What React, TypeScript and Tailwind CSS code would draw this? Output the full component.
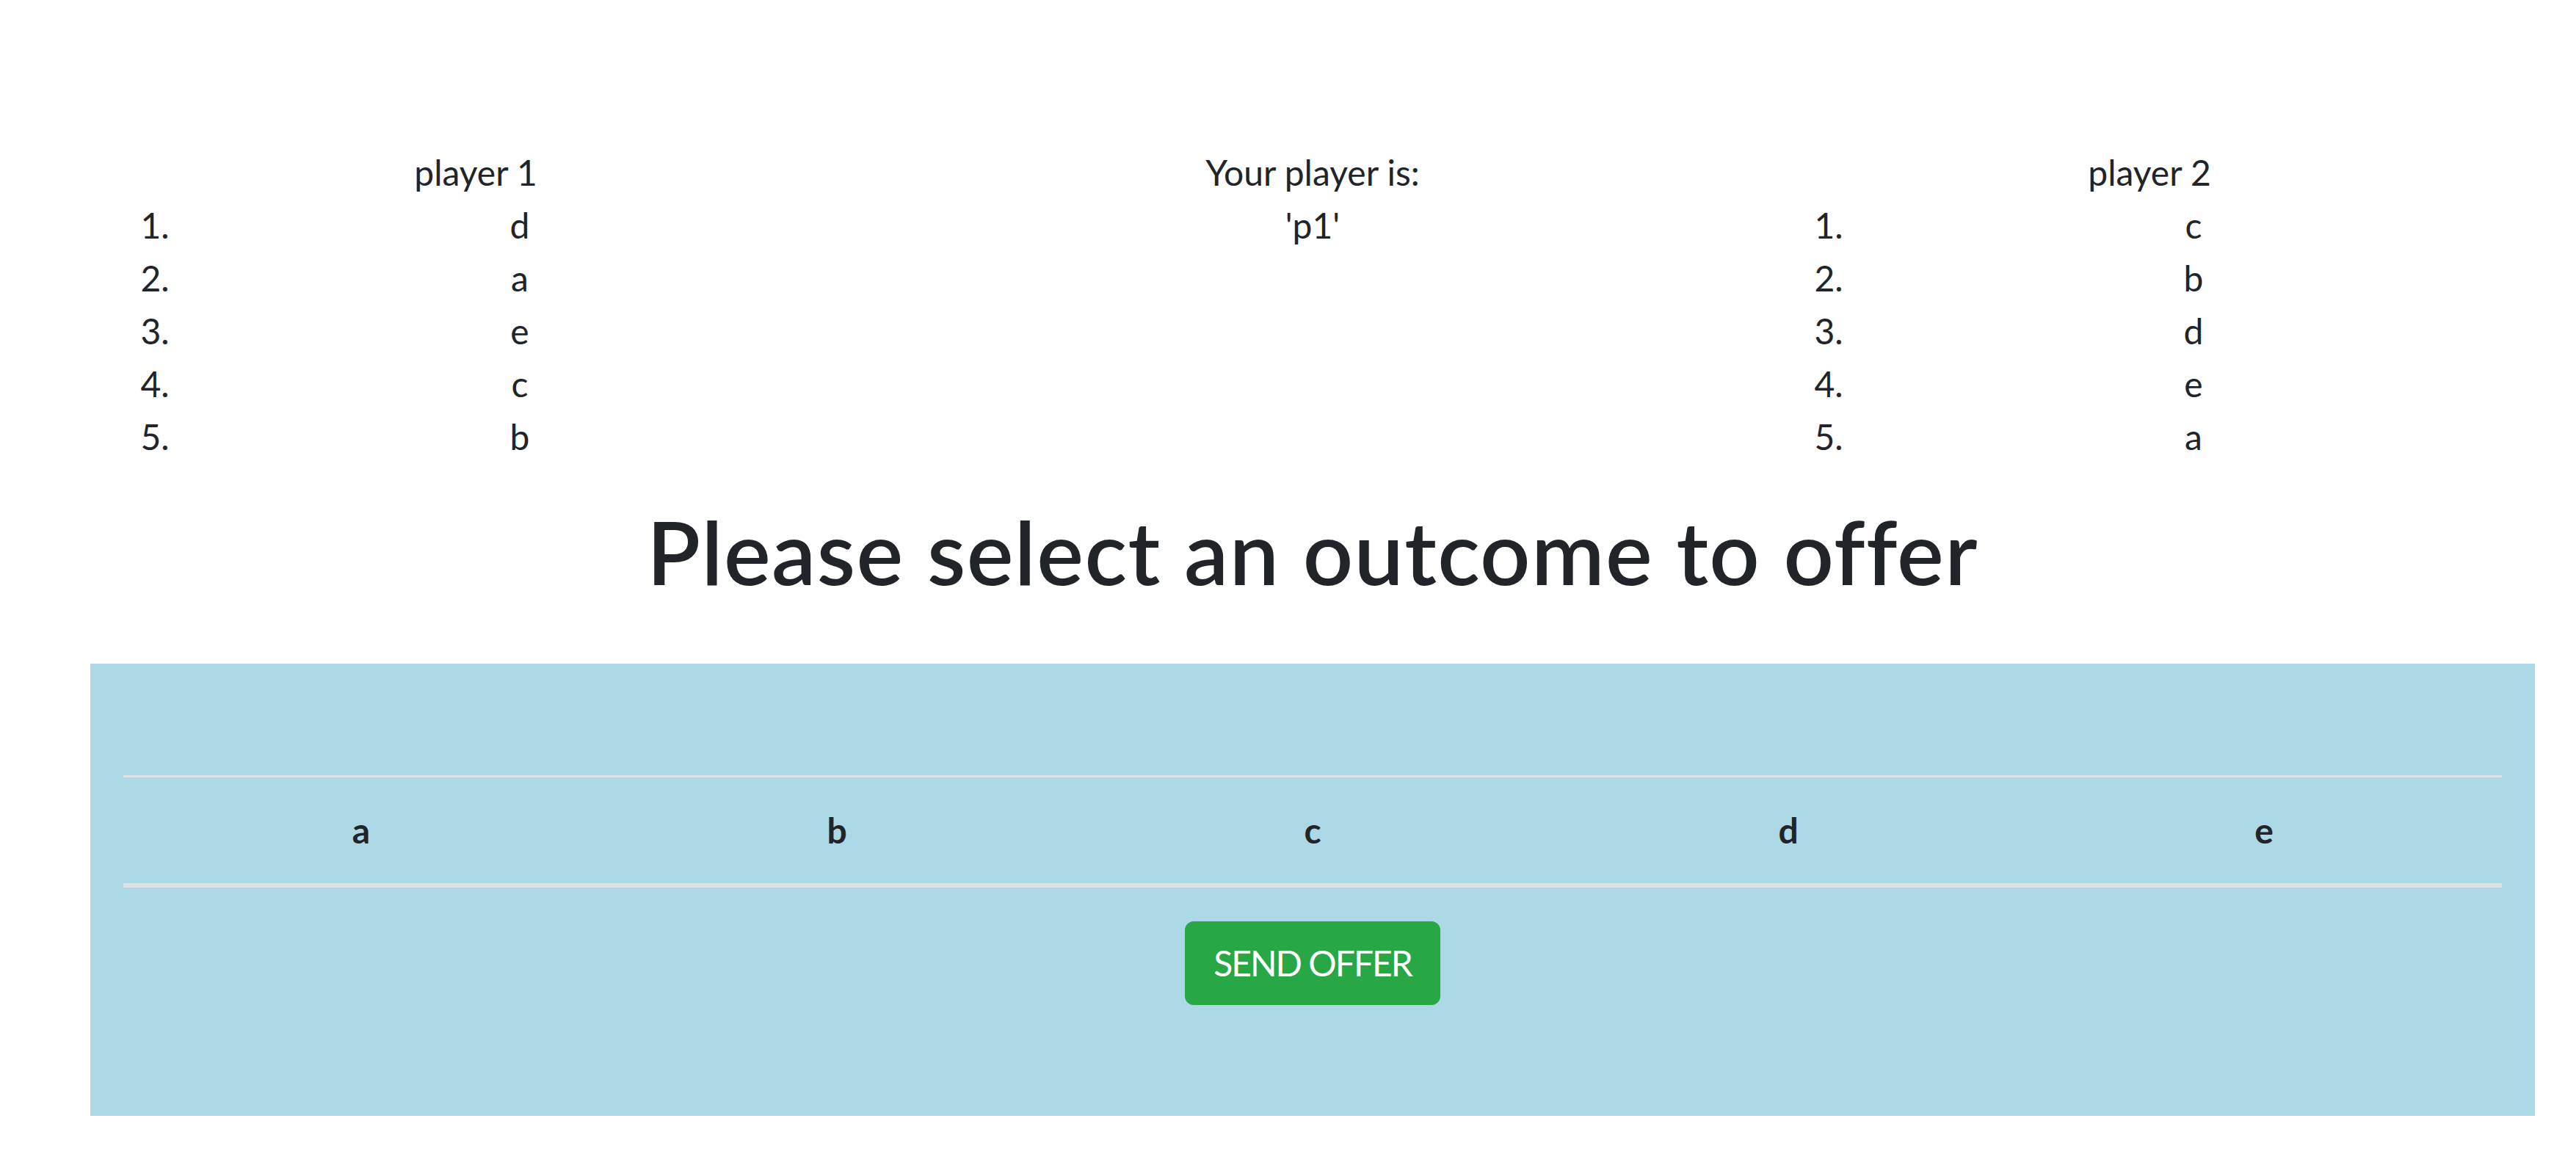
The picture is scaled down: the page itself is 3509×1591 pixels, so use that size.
import React from 'react';

const player1 = ['d', 'a', 'e', 'c', 'b'];
const player2 = ['c', 'b', 'd', 'e', 'a'];
const outcomes = ['a', 'b', 'c', 'd', 'e'];

const PreferenceList: React.FC<{ title: string; items: string[] }> = ({ title, items }) => (
  <div>
    <div className="text-center">{title}</div>
    <ol className="list-decimal list-outside pl-[120px] mb-[48px]">
      {items.map((item, i) => (
        <li key={i} className="text-center">{item}</li>
      ))}
    </ol>
  </div>
);

const App: React.FC = () => {
  return (
    <div className="min-h-screen bg-white pl-[123px] pr-[56px] pt-[199px] text-[48px] leading-[72px] text-[#212529] font-['Lato','Liberation_Sans',sans-serif]">
      <div className="grid grid-cols-3 gap-x-[90px]">
        <PreferenceList title="player 1" items={player1} />
        <div className="text-center">
          <div>Your player is:</div>
          <div>'p1'</div>
        </div>
        <PreferenceList title="player 2" items={player2} />
      </div>

      <h1 className="text-center text-[120px] leading-[144px] font-semibold tracking-[1.4px] mb-[81px]">
        Please select an outcome to offer
      </h1>

      <div className="bg-[#add8e6] px-[45px] pt-[152px] pb-[151px]">
        <table className="w-full table-fixed border-collapse">
          <thead>
            <tr className="border-t-[3px] border-b-[6px] border-[#dee2e6]">
              {outcomes.map(o => (
                <th key={o} className="py-[36px] px-[36px] font-bold text-center">{o}</th>
              ))}
            </tr>
          </thead>
        </table>
        <div className="flex justify-center mt-[46px]">
          <button className="bg-[#28a745] border-[3px] border-[#28a745] text-white rounded-[12px] px-[36px] py-[18px] text-[48px] leading-[72px] tracking-[-2px]">
            SEND OFFER
          </button>
        </div>
      </div>
    </div>
  );
};

export default App;
